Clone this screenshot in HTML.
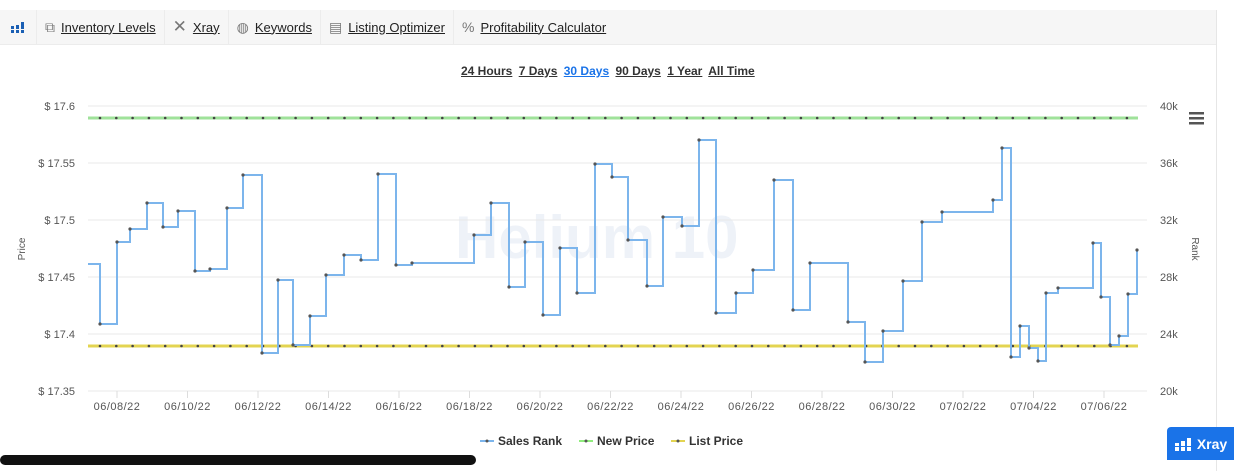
<!DOCTYPE html>
<html><head><meta charset="utf-8"><style>
body{margin:0;width:1234px;height:460px;background:#fff;font-family:"Liberation Sans",sans-serif;overflow:hidden;position:relative}
.box{position:absolute;left:0;top:10px;width:1216px;height:460px;border-right:1px solid #e6e6e6;border-top:1px solid #e6e6e6}
.tb{position:absolute;left:0;top:10px;width:1216px;height:34px;background:#f6f6f6;border-bottom:1px solid #ececec;display:flex;align-items:center;font-size:13px;color:#222}
.tb div{height:34px;display:flex;align-items:center;padding:0 8px;border-right:1px solid #ececec}
.tb u{margin-left:6px}
.tb .ic{color:#777;font-size:14px}
.rng{position:absolute;top:64px;left:461px;font-size:12px;font-weight:bold;color:#333}
.rng u{margin-right:3px}
svg{position:absolute;left:0;top:0}
.xb{position:absolute;left:1167px;top:427px;width:67px;height:33px;background:#1a73e8;border-radius:4px 0 0 0;color:#fff;font-weight:bold;font-size:14px;display:flex;align-items:center;justify-content:center;gap:5px}
.bar{position:absolute;left:0;top:455px;width:476px;height:10px;background:#111;border-radius:8px}
</style></head><body>
<div class="box"></div>
<div class="tb">
<div style="padding:0 10px"><svg style="position:static" width="16" height="14"><rect x="1" y="6" width="3" height="3" fill="#1a5fb4"/><rect x="1" y="10" width="3" height="3" fill="#1a5fb4"/><rect x="6" y="5" width="3" height="4" fill="#1a5fb4"/><rect x="6" y="10" width="3" height="3" fill="#1a5fb4"/><rect x="11" y="2" width="3" height="7" fill="#1a5fb4"/><rect x="11" y="10" width="3" height="3" fill="#1a5fb4"/></svg></div>
<div><span class="ic">⧉</span><u>Inventory Levels</u></div>
<div><span class="ic" style="font-size:17px">✕</span><u>Xray</u></div>
<div><span class="ic">◍</span><u>Keywords</u></div>
<div><span class="ic">▤</span><u>Listing Optimizer</u></div>
<div style="border:none"><span class="ic">%</span><u>Profitability Calculator</u></div>
</div>
<div class="rng"><u>24 Hours</u> <u>7 Days</u> <u style="color:#1a73e8">30 Days</u> <u>90 Days</u> <u>1 Year</u> <u>All Time</u></div>
<svg id="s" width="1234" height="460" font-family="Liberation Sans, sans-serif" font-size="11" fill="#555"></svg>
<div class="xb"><svg style="position:static" width="18" height="14"><rect x="1" y="6" width="4" height="3" fill="#fff"/><rect x="1" y="10" width="4" height="4" fill="#fff"/><rect x="7" y="4" width="4" height="5" fill="#fff"/><rect x="7" y="10" width="4" height="4" fill="#fff"/><rect x="13" y="1" width="4" height="8" fill="#fff"/><rect x="13" y="10" width="4" height="4" fill="#fff"/></svg>Xray</div>
<div class="bar"></div>
<script>
var s='';
var gy=[106,163,220,277,334,391],pl=['$ 17.6','$ 17.55','$ 17.5','$ 17.45','$ 17.4','$ 17.35'],rl=['40k','36k','32k','28k','24k','20k'];
s+='<text x="455" y="258" font-size="60" font-weight="bold" fill="#eef2f8">Helium 10</text>';
for(var i=0;i<6;i++){s+='<line x1="88" x2="1147" y1="'+gy[i]+'" y2="'+gy[i]+'" stroke="#e8e8e8"/>';
s+='<text x="75" y="'+(gy[i]+4)+'" text-anchor="end">'+pl[i]+'</text><text x="1160" y="'+(gy[i]+4)+'">'+rl[i]+'</text>';}
var d=['06/08/22','06/10/22','06/12/22','06/14/22','06/16/22','06/18/22','06/20/22','06/22/22','06/24/22','06/26/22','06/28/22','06/30/22','07/02/22','07/04/22','07/06/22'];
for(i=0;i<15;i++){var x=117+i*70.5;s+='<line x1="'+x+'" x2="'+x+'" y1="391" y2="398" stroke="#ddd"/><text x="'+x+'" y="410" text-anchor="middle" letter-spacing="0.5">'+d[i]+'</text>';}
s+='<text transform="translate(25,249) rotate(-90)" text-anchor="middle" font-size="10">Price</text><text transform="translate(1192,249) rotate(90)" text-anchor="middle" font-size="10">Rank</text>';
s+='<rect x="1189" y="112" width="15" height="2.5" fill="#555"/><rect x="1189" y="117" width="15" height="2.5" fill="#555"/><rect x="1189" y="122" width="15" height="2.5" fill="#555"/>';
s+='<line x1="88" x2="1138" y1="118" y2="118" stroke="#9fe29a" stroke-width="3"/><line x1="88" x2="1138" y1="346" y2="346" stroke="#e3d451" stroke-width="3"/>';
for(var x=100;x<1138;x+=16.3){s+='<circle cx="'+x+'" cy="118" r="1.3" fill="#444"/><circle cx="'+x+'" cy="346" r="1.3" fill="#444"/>';}
var p=[[88,264],[100,324],[117,242],[130,229],[147,203],[163,227],[178,211],[195,271],[210,269],[227,208],[243,175],[262,353],[278,280],[293,345],[310,316],[326,275],[344,255],[361,260],[378,174],[396,265],[412,263],[474,235],[491,203],[509,287],[525,242],[543,315],[560,248],[577,293],[595,164],[612,177],[628,240],[647,286],[663,217],[682,226],[699,140],[716,313],[736,293],[753,270],[774,180],[793,310],[810,263],[848,322],[865,362],[883,331],[903,281],[922,222],[942,212],[993,200],[1002,148],[1011,357],[1020,326],[1029,348],[1038,361],[1046,293],[1058,288],[1093,243],[1101,297],[1110,345],[1119,336],[1128,294],[1137,250]];
var ph='M'+p[0][0]+' '+p[0][1],dots='';
for(i=1;i<p.length;i++){ph+=' H'+p[i][0]+' V'+p[i][1];dots+='<circle cx="'+p[i][0]+'" cy="'+p[i][1]+'" r="1.6" fill="#555"/>';}
s+='<path d="'+ph+'" fill="none" stroke="#7cb5ec" stroke-width="2"/>'+dots;
var lg=[[480,'#7cb5ec','Sales Rank'],[579,'#90ed7d','New Price'],[671,'#e3d451','List Price']];
for(i=0;i<3;i++){var L=lg[i];s+='<line x1="'+L[0]+'" x2="'+(L[0]+14)+'" y1="441" y2="441" stroke="'+L[1]+'" stroke-width="2"/><circle cx="'+(L[0]+7)+'" cy="441" r="1.5" fill="#555"/><text x="'+(L[0]+18)+'" y="445" font-size="12" font-weight="bold" fill="#333">'+L[2]+'</text>';}
document.getElementById('s').innerHTML=s;
</script>
</body></html>
